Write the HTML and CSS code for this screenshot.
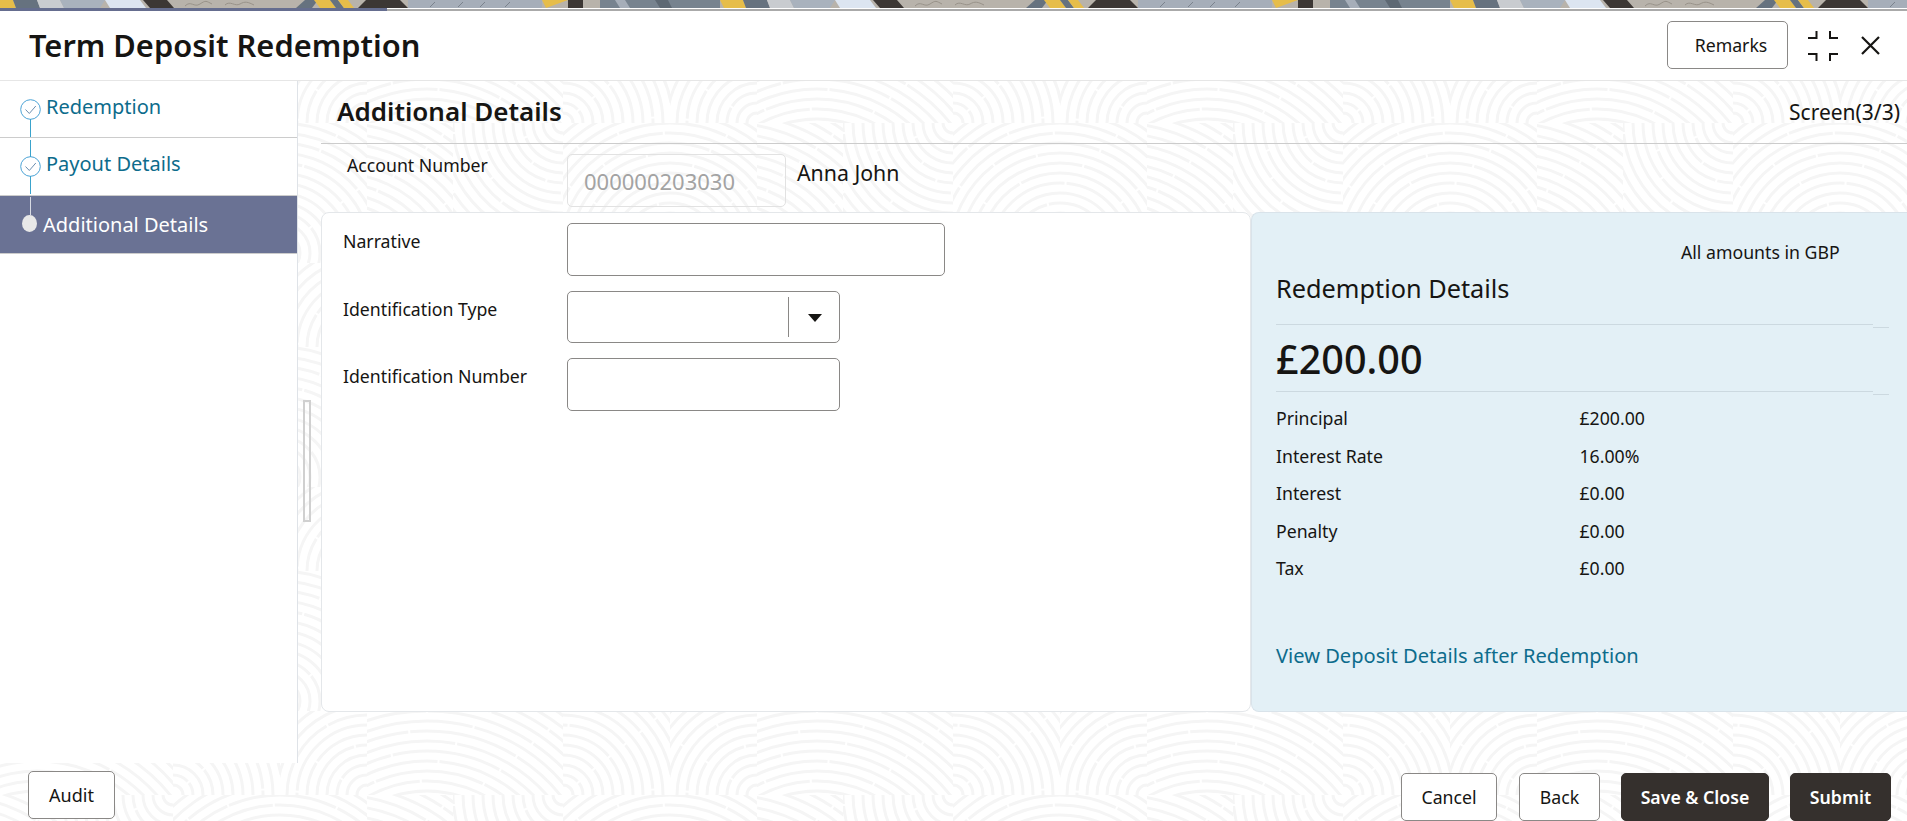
FILE: index.html
```html
<!DOCTYPE html>
<html lang="en">
<head>
  <meta charset="UTF-8">
  <meta name="viewport" content="width=device-width, initial-scale=1.0">
  <title>Term Deposit Redemption</title>
  <link rel="stylesheet" href="styles.css">
</head>
<body>
  <!-- fingerprint texture behind the page -->
  <svg class="texture" width="100%" height="100%" aria-hidden="true">
    <defs>
      <g id="rings" fill="none" stroke="#f5f5f5" stroke-width="3" stroke-dasharray="110 2">
        <circle r="10"/><circle r="20"/><circle r="30"/><circle r="40"/><circle r="50"/>
        <circle r="60"/><circle r="70"/><circle r="80"/><circle r="90"/><circle r="100"/>
        <circle r="110"/><circle r="120"/><circle r="130"/><circle r="140"/><circle r="150"/>
        <circle r="160"/><circle r="170"/><circle r="180"/><circle r="190"/><circle r="200"/>
        <circle r="210"/><circle r="220"/><circle r="230"/><circle r="240"/><circle r="250"/>
      </g>
      <pattern id="prints" x="173" y="123" width="390" height="224" patternUnits="userSpaceOnUse">
        <svg x="0" y="0" width="107" height="140"><use href="#rings" x="107" y="130"/></svg>
        <svg x="107" y="0" width="87" height="140"><use href="#rings" x="0" y="130"/></svg>
        <svg x="194" y="0" width="86" height="140"><use href="#rings" x="-30" y="170"/></svg>
        <svg x="280" y="0" width="110" height="140"><use href="#rings" x="110" y="0"/></svg>
        <svg x="0" y="140" width="107" height="84"><use href="#rings" x="0" y="84"/></svg>
        <svg x="107" y="140" width="87" height="84"><use href="#rings" x="87" y="84"/></svg>
        <svg x="194" y="140" width="196" height="84"><use href="#rings" x="60" y="190"/></svg>
      </pattern>
    </defs>
    <rect width="100%" height="100%" fill="url(#prints)"/>
  </svg>

  <div class="banner">
    <svg width="100%" height="8" aria-hidden="true">
      <defs>
        <pattern id="strip" width="730" height="8" patternUnits="userSpaceOnUse">
          <rect width="730" height="8" fill="#b8b3ab"/>
          <polygon points="0,0 13,0 16,8 0,8" fill="#e6bd4a"/>
          <polygon points="13,0 37,0 40,8 16,8" fill="#66727f"/>
          <polygon points="37,0 60,0 64,8 40,8" fill="#c9ccd0"/>
          <polygon points="60,0 105,0 100,8 64,8" fill="#a9b2bd"/>
          <polygon points="105,0 140,0 146,8 110,8" fill="#dce5f1"/>
          <polygon points="143,0 167,0 174,8 150,8" fill="#3c3734"/>
          <path d="M185 6c6-6 9 2 15-2s6-3 12 0M225 5c5-5 10 2 15-1s8-2 14 1" fill="none" stroke="#989289"/>
          <polygon points="296,8 305,0 318,0 312,8" fill="#66727f"/>
          <polygon points="314,0 330,0 336,8 320,8" fill="#e6bd4a"/>
          <polygon points="330,0 338,0 344,8 336,8" fill="#66727f"/>
          <polygon points="338,0 348,0 354,8 344,8" fill="#e6bd4a"/>
          <polygon points="358,8 366,0 400,0 408,8" fill="#3c3734"/>
          <rect x="408" width="134" height="8" fill="#a6aeb9"/>
          <path d="M430 7l5-5M458 7l5-5M480 7l5-5M505 7l5-5" stroke="#7b838d"/>
          <polygon points="542,0 568,0 546,8" fill="#e6bd4a"/>
          <rect x="568" width="15" height="8" fill="#3c3734"/>
          <rect x="600" width="120" height="8" fill="#77838f"/>
          <polygon points="615,0 625,0 630,8 620,8" fill="#a6aeb9"/>
          <polygon points="655,0 668,0 672,8 660,8" fill="#5d6873"/>
          <polygon points="720,0 730,0 730,8 724,8" fill="#e6bd4a"/>
        </pattern>
      </defs>
      <rect width="100%" height="8" fill="url(#strip)"/>
    </svg>
  </div>
  <div class="progress"><div class="progress-done"></div></div>

  <header class="header">
    <h1>Term Deposit Redemption</h1>
    <div class="header-tools">
      <button class="btn btn-remarks">Remarks</button>
      <svg class="icon-shrink" width="30" height="30" viewBox="0 0 30 30" fill="none" stroke="#161513" stroke-width="2" aria-hidden="true">
        <path d="M0 7h8.5V0M22 0v7h8M0 23h8.5v7M30 23h-8v7"/>
      </svg>
      <svg class="icon-close" width="19" height="19" viewBox="0 0 19 19" fill="none" stroke="#161513" stroke-width="2.2" aria-hidden="true">
        <path d="M1 1l17 17M18 1L1 18"/>
      </svg>
    </div>
  </header>

  <div class="content">
    <nav class="steps">
      <div class="step step-done">
        <svg class="step-mark" width="21" height="21" viewBox="0 0 21 21" fill="none" aria-hidden="true">
          <circle cx="10.5" cy="10.5" r="9.8" stroke="#4ba3d6"/>
          <path d="M5.5 10.5l3.8 4 6.5-7.5" stroke="#6d8fb0"/>
        </svg>
        <span>Redemption</span>
      </div>
      <div class="step step-done">
        <svg class="step-mark" width="21" height="21" viewBox="0 0 21 21" fill="none" aria-hidden="true">
          <circle cx="10.5" cy="10.5" r="9.8" stroke="#4ba3d6"/>
          <path d="M5.5 10.5l3.8 4 6.5-7.5" stroke="#6d8fb0"/>
        </svg>
        <span>Payout Details</span>
      </div>
      <div class="step step-active">
        <i class="step-dot"></i>
        <span>Additional Details</span>
      </div>
    </nav>

    <main class="main">
      <div class="section-head">
        <h2>Additional Details</h2>
        <span class="screen-count">Screen(3/3)</span>
      </div>

      <div class="account-row">
        <label class="account-label">Account Number</label>
        <div class="account-input">000000203030</div>
        <span class="account-name">Anna John</span>
      </div>

      <div class="columns">
        <section class="form-card">
          <div class="field field-narrative">
            <label>Narrative</label>
            <input class="input input-wide" type="text">
          </div>
          <div class="field">
            <label>Identification Type</label>
            <div class="select">
              <i class="select-bar"></i>
              <i class="select-arrow"></i>
            </div>
          </div>
          <div class="field">
            <label>Identification Number</label>
            <input class="input" type="text">
          </div>
        </section>

        <aside class="summary">
          <div class="summary-note">All amounts in GBP</div>
          <h3>Redemption Details</h3>
          <div class="summary-total">£200.00</div>
          <dl class="summary-rows">
            <dt>Principal</dt><dd>£200.00</dd>
            <dt>Interest Rate</dt><dd>16.00%</dd>
            <dt>Interest</dt><dd>£0.00</dd>
            <dt>Penalty</dt><dd>£0.00</dd>
            <dt>Tax</dt><dd>£0.00</dd>
          </dl>
          <a class="summary-link">View Deposit Details after Redemption</a>
        </aside>
      </div>
    </main>
    <i class="splitter"></i>
  </div>

  <footer class="footer">
    <button class="btn btn-audit">Audit</button>
    <div class="footer-actions">
      <button class="btn btn-cancel">Cancel</button>
      <button class="btn btn-back">Back</button>
      <button class="btn btn-dark btn-save">Save &amp; Close</button>
      <button class="btn btn-dark btn-submit">Submit</button>
    </div>
  </footer>
</body>
</html>
```

FILE: styles.css
```css
* {
  box-sizing: border-box;
}
html, body {
  height: 821px;
  overflow: hidden;
}
body {
  margin: 0;
  position: relative;
  background: #fff;
  font-family: "Noto Sans", Arial, sans-serif;
  color: #161513;
}
.texture {
  position: absolute;
  top: 0;
  left: 0;
}
.banner {
  position: relative;
  height: 8px;
  font-size: 0;
}
.progress {
  position: relative;
  height: 3px;
  background: #fff;
  border-bottom: 2px solid #aaa;
}
.progress-done {
  width: 387px;
  height: 3px;
  background: #656d8f;
}

/* header */
.header {
  position: relative;
  height: 70px;
  background: #fff;
  border-bottom: 1px solid #e6e6e6;
  display: flex;
  justify-content: space-between;
  align-items: center;
  padding: 0 27px 0 29px;
}
h1 {
  margin: 0 0 2px;
  font-size: 30.8px;
  font-weight: 600;
}
.header-tools {
  display: flex;
  align-items: center;
}
.icon-shrink {
  margin-left: 20px;
}
.icon-close {
  margin-left: 23px;
}

/* buttons */
.btn {
  height: 48px;
  padding: 0;
  background: #fff;
  border: 1px solid #8a8886;
  border-radius: 5px;
  font-family: inherit;
  font-size: 17.7px;
  color: #161513;
}
.btn-remarks {
  width: 121px;
  padding-left: 7px;
  margin-top: -1px;
}
.btn-audit {
  width: 87px;
  font-size: 18px;
}
.btn-cancel {
  width: 96px;
  margin-right: 1px;
}
.btn-back {
  width: 81px;
}
.btn-dark {
  background: #35302d;
  border-color: #35302d;
  color: #fff;
  font-weight: 600;
}
.btn-save {
  width: 148px;
}
.btn-submit {
  width: 101px;
}

/* steps */
.content {
  position: relative;
  display: flex;
  height: 682px;
}
.steps {
  width: 298px;
  flex: none;
  background: #fff;
  border-right: 1px solid #dfe3e8;
}
.step {
  position: relative;
  height: 57px;
  display: flex;
  align-items: flex-start;
  border-bottom: 1px solid #ccc;
  font-size: 20px;
  color: #0d6c8c;
}
.step-done {
  padding: 12px 0 0 20px;
}
.step-done + .step-done {
  height: 58px;
}
.step-done::after {
  content: "";
  position: absolute;
  left: 30px;
  top: 38px;
  width: 1px;
  height: 18px;
  background: #3aa3cc;
}
.step-done + .step-done::before {
  content: "";
  position: absolute;
  left: 30px;
  top: 2px;
  width: 1px;
  height: 17px;
  background: #3aa3cc;
}
.step-mark {
  margin: 6px 5px 0 0;
  flex: none;
}
.step-active {
  height: 58px;
  padding: 15px 0 0 22px;
  background: #6a7294;
  color: #fff;
}
.step-active::before {
  content: "";
  position: absolute;
  left: 30px;
  top: 1px;
  width: 1px;
  height: 18px;
  background: #d8dbe3;
}
.step-dot {
  width: 15px;
  height: 17px;
  margin: 4px 6px 0 0;
  flex: none;
  border-radius: 50%;
  background: #e8e8e8;
}

/* main area */
.main {
  position: relative;
  flex: 1;
  min-width: 0;
  padding-left: 23px;
}
.section-head {
  height: 63px;
  display: flex;
  justify-content: space-between;
  align-items: flex-start;
  padding: 12px 7px 0 16px;
  border-bottom: 1px solid #ccc;
}
h2 {
  margin: 0;
  font-size: 26px;
  font-weight: 600;
}
.screen-count {
  margin-top: 5px;
  font-size: 21px;
}
.account-row {
  height: 68px;
  display: flex;
  align-items: flex-start;
  padding: 10px 0 0 26px;
}
.account-label {
  width: 220px;
  margin-top: -1px;
  font-size: 17.7px;
}
.account-input {
  width: 219px;
  height: 53px;
  padding: 11px 0 0 16px;
  border: 1px solid #e2e2e2;
  border-radius: 5px;
  font-size: 22px;
  color: #a3a3a3;
}
.account-name {
  margin: 4px 0 0 11px;
  font-size: 21.3px;
}
.columns {
  height: 500px;
  display: flex;
}

/* form card */
.form-card {
  width: 930px;
  flex: none;
  padding: 10px 0 0 21px;
  background: #fff;
  border: 1px solid #e4e7ea;
  border-radius: 8px;
}
.field {
  display: flex;
  align-items: flex-start;
  margin-top: 15px;
}
.field-narrative {
  margin-top: 0;
}
.field label {
  width: 224px;
  margin-top: 6px;
  flex: none;
  font-size: 17.7px;
}
.input, .select {
  width: 273px;
  height: 53px;
  margin: 0;
  background: #fff;
  border: 1px solid #8a8886;
  border-radius: 5px;
}
.input-wide {
  width: 378px;
}
.select {
  position: relative;
  height: 52px;
}
.select-bar {
  position: absolute;
  left: 220px;
  top: 5px;
  width: 1px;
  height: 40px;
  background: #8a8886;
}
.select-arrow {
  position: absolute;
  left: 240px;
  top: 22px;
  border-left: 7px solid transparent;
  border-right: 7px solid transparent;
  border-top: 8px solid #161513;
}

/* redemption summary */
.summary {
  flex: 1;
  min-width: 0;
  padding: 28px 0 0 24px;
  background: #e3f0f6;
  border: 1px solid #d9e3ea;
  border-right: 0;
  border-radius: 8px 0 0 8px;
  font-size: 17.7px;
}
.summary-note {
  margin-left: 405px;
  line-height: 22px;
}
h3 {
  position: relative;
  width: 597px;
  height: 54px;
  margin: 8px 0 0;
  border-bottom: 1px solid #ccd9e0;
  font-size: 25.3px;
  font-weight: 400;
}
.summary-total {
  position: relative;
  width: 597px;
  height: 67px;
  padding-top: 8px;
  border-bottom: 1px solid #ccd9e0;
  font-size: 39.6px;
  font-weight: 500;
  line-height: 52px;
}
/* short offset piece at the end of each rule */
h3::after, .summary-total::after {
  content: "";
  position: absolute;
  right: -16px;
  bottom: -4px;
  width: 16px;
  height: 1px;
  background: #ccd9e0;
}
.summary-rows {
  display: grid;
  grid-template-columns: 303.5px 1fr;
  grid-auto-rows: 37.5px;
  margin: 8px 0 0;
  line-height: 37.5px;
}
.summary-rows dd {
  margin: 0;
}
.summary-link {
  display: block;
  margin-top: 54px;
  font-size: 20.1px;
  color: #0d6c8c;
}

/* odd thin handle between steps and form */
.splitter {
  position: absolute;
  left: 303px;
  top: 319px;
  width: 8px;
  height: 122px;
  border: 2px solid #d0d0d0;
}

/* footer */
.footer {
  position: relative;
  height: 60px;
  display: flex;
  justify-content: space-between;
  align-items: flex-start;
  padding: 8px 16px 0 28px;
}
.footer-actions {
  display: flex;
  gap: 21px;
  margin-top: 2px;
}
```
